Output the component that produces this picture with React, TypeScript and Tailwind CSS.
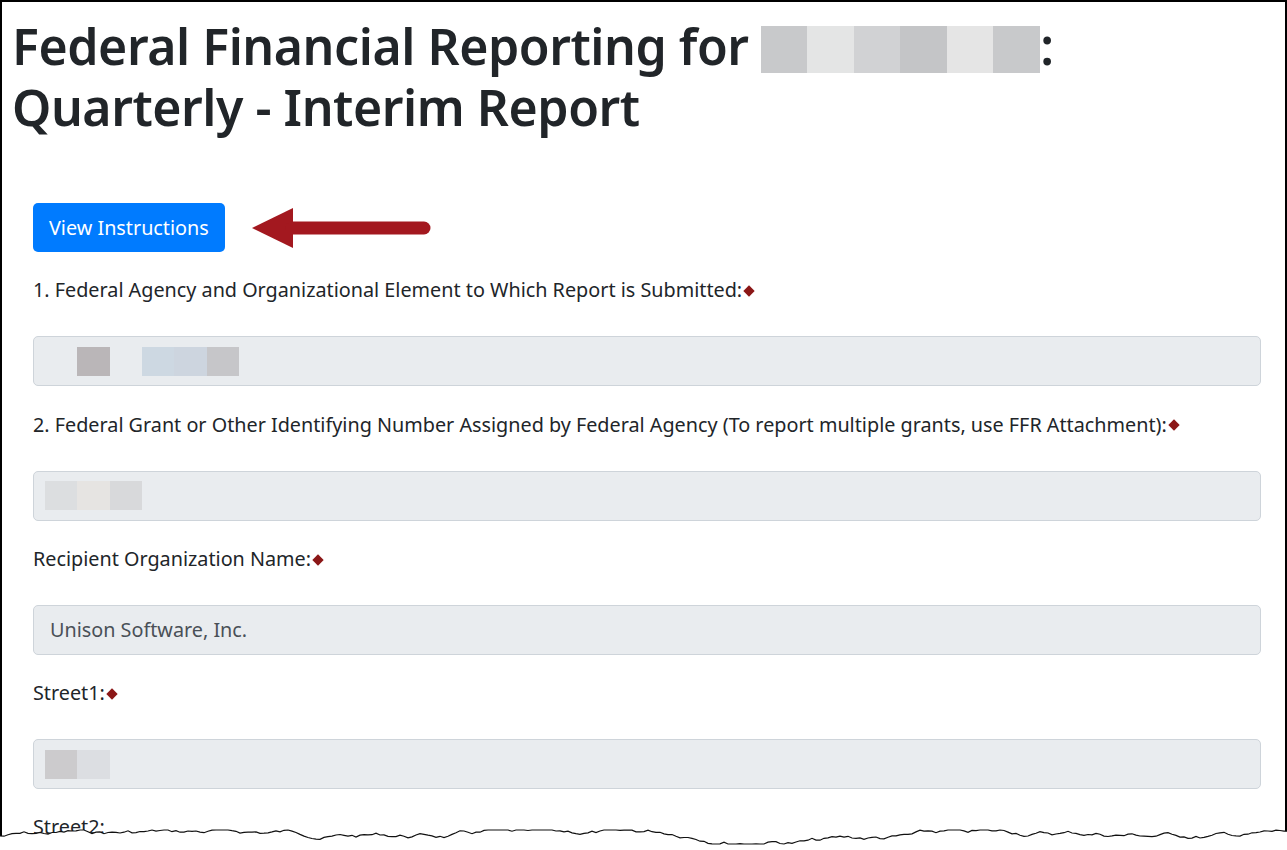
import React from "react";

const font = { fontFamily: '"Noto Sans", "Open Sans", Arial, sans-serif' };

function Required() {
  return <span className="inline-block w-[8px] h-[8px] bg-[#8b1717] rotate-45 ml-[3px] mb-[2px] align-middle" />;
}

function Field({ label, required, children }: { label: string; required?: boolean; children?: React.ReactNode }) {
  return (
    <div className="mt-[23.3px]">
      <div className="h-[30px] leading-[30px] text-[19.8px] text-[#212529] whitespace-nowrap">
        {label}
        {required && <Required />}
      </div>
      <div className="mt-[31px] h-[50px] bg-[#e9ecef] border border-[#ced4da] rounded-[5px] flex items-center px-[11px] text-[19.8px] text-[#495057]">
        {children}
      </div>
    </div>
  );
}

function Blocks({ items }: { items: { w: number; c: string }[] }) {
  return (
    <div className="flex h-[29px]">
      {items.map((b, i) => (
        <div key={i} style={{ width: b.w, background: b.c }} />
      ))}
    </div>
  );
}

function TornEdge() {
  const pts: string[] = [];
  let seed = 7;
  const rnd = () => {
    seed = (seed * 9301 + 49297) % 233280;
    return seed / 233280;
  };
  let y = 8;
  for (let x = 0; x <= 1290; x += 4) {
    y += (rnd() - 0.5) * 4;
    if (y < 2) y = 2;
    if (y > 16) y = 16;
    pts.push(`${x},${y.toFixed(1)}`);
  }
  const d = `M${pts.join(" L")}`;
  return (
    <svg className="absolute left-0 bottom-0" width="1287" height="22" viewBox="0 0 1287 22">
      <path d={`${d} L1290,22 L0,22 Z`} fill="#fff" />
      <path d={d} fill="none" stroke="#111" strokeWidth="1.2" />
    </svg>
  );
}

export default function App() {
  return (
    <div className="w-[1287px] h-[850px] bg-white relative overflow-hidden" style={font}>
      <div className="h-[850px] border-l-2 border-t-2 border-r-2 border-black pl-[31px] pr-[24px]">
        <h1 className="-ml-[21px] mt-[14px] h-[122px] text-[50px] leading-[61px] font-semibold text-[#212529] tracking-[-0.45px]">
          <span>Federal Financial Reporting for </span>
          <span className="inline-flex h-[47px] align-[-8px]">
            <span className="w-[46px] bg-[#c8c9cb]" />
            <span className="w-[47px] bg-[#e4e5e5]" />
            <span className="w-[46px] bg-[#d1d2d4]" />
            <span className="w-[47px] bg-[#c4c5c7]" />
            <span className="w-[46px] bg-[#e5e5e5]" />
            <span className="w-[47px] bg-[#c8c9cb]" />
          </span>
          <span>:</span>
          <br />
          Quarterly - Interim Report
        </h1>

        <div className="mt-[65px] flex items-center">
          <button className="h-[49px] px-[16px] bg-[#007bff] text-white text-[19.8px] rounded-[5px]">View Instructions</button>
          <svg className="ml-[27px]" width="180" height="44" viewBox="0 0 180 44">
            <path d="M0 22 L41 2 L41 42 Z" fill="#a3181f" />
            <path d="M40 22 H172" stroke="#a3181f" strokeWidth="13" strokeLinecap="round" />
          </svg>
        </div>

        <Field label="1. Federal Agency and Organizational Element to Which Report is Submitted:" required>
          <div className="ml-[32px] flex">
            <Blocks items={[{ w: 33, c: "#bab6b8" }]} />
            <div className="w-[32px]" />
            <Blocks items={[{ w: 32, c: "#cdd8e2" }, { w: 33, c: "#cdd5df" }, { w: 32, c: "#c6c6c9" }]} />
          </div>
        </Field>

        <Field label="2. Federal Grant or Other Identifying Number Assigned by Federal Agency (To report multiple grants, use FFR Attachment):" required>
          <Blocks items={[{ w: 32, c: "#dcdee0" }, { w: 33, c: "#e6e4e2" }, { w: 32, c: "#d8d9db" }]} />
        </Field>

        <Field label="Recipient Organization Name:" required>
          <span className="pl-[5px]">Unison Software, Inc.</span>
        </Field>

        <Field label="Street1:" required>
          <Blocks items={[{ w: 32, c: "#cccbcd" }, { w: 33, c: "#dcdee2" }]} />
        </Field>

        <div className="mt-[23px] h-[30px] leading-[30px] text-[19.8px] text-[#212529]">Street2:</div>
      </div>
      <TornEdge />
    </div>
  );
}
